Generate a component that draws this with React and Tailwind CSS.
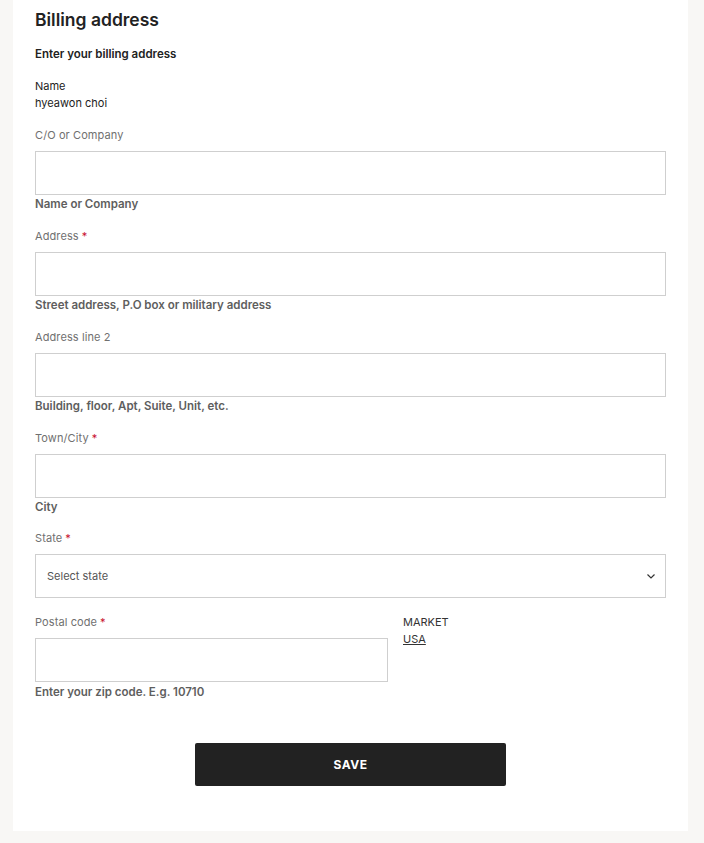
const Req = () => <span className="text-[#c8102e] ml-[3px]">*</span>;

function Field({ label, required, helper, last }) {
  return (
    <div className={last ? 'mb-[15px]' : 'mb-[16px]'}>
      <div className="text-[11px] leading-[16px] text-[#707070] mb-[8px] tracking-[0.1px]">
        {label}
        {required && <Req />}
      </div>
      <input className="block w-full h-[44px] border border-[#cfcfcf] bg-white outline-none px-3 text-[12px]" />
      <div className="mt-[1px] text-[11.5px] leading-[16px] font-semibold text-[#5e5e5e]">{helper}</div>
    </div>
  );
}

export default function App() {
  return (
    <div
      className="min-h-[843px] bg-[#f8f7f5] pl-[13px] pr-[16px]"
      style={{ fontFamily: 'Inter, "Noto Sans", sans-serif' }}
    >
      <div className="bg-white px-[22px] pb-[45px]">
        <h1 className="pt-[9px] text-[17.5px] leading-[22px] font-semibold text-[#222]">Billing address</h1>
        <div className="mt-[15px] text-[11.5px] leading-[16px] font-semibold text-[#222]">Enter your billing address</div>

        <div className="mt-[16px] text-[11px] leading-[16px] text-[#222]">Name</div>
        <div className="mt-[1px] text-[11px] leading-[16px] text-[#222]">hyeawon choi</div>

        <div className="mt-[16px]">
          <Field label="C/O or Company" helper="Name or Company" />
          <Field label="Address" required helper="Street address, P.O box or military address" />
          <Field label="Address line 2" helper="Building, floor, Apt, Suite, Unit, etc." />
          <Field label="Town/City" required helper="City" last />

          <div className="mb-[16px]">
            <div className="text-[11px] leading-[16px] text-[#707070] mb-[8px] tracking-[0.1px]">
              State
              <Req />
            </div>
            <div className="flex items-center justify-between h-[44px] border border-[#cfcfcf] pl-[11px] pr-[8px]">
              <span className="text-[11px] text-[#555]">Select state</span>
              <svg width="12" height="12" viewBox="0 0 12 12" fill="none" stroke="#333" strokeWidth="1.2">
                <path d="M2.5 4.5 6 8l3.5-3.5" />
              </svg>
            </div>
          </div>

          <div className="flex gap-[15px]">
            <div className="w-[353px]">
              <div className="text-[11px] leading-[16px] text-[#707070] mb-[8px] tracking-[0.1px]">
                Postal code
                <Req />
              </div>
              <input className="block w-full h-[44px] border border-[#cfcfcf] bg-white outline-none px-3 text-[12px]" />
              <div className="mt-[2px] text-[11.5px] leading-[16px] font-semibold text-[#5e5e5e]">Enter your zip code. E.g. 10710</div>
            </div>
            <div>
              <div className="text-[11px] leading-[16px] text-[#333]">MARKET</div>
              <div className="mt-[1px] text-[11px] leading-[16px] text-[#333] underline">USA</div>
            </div>
          </div>
        </div>

        <div className="flex justify-center mt-[43px]">
          <button className="w-[311px] h-[43px] bg-[#222] rounded-[2px] text-white text-[12px] font-bold tracking-[0.5px]">
            SAVE
          </button>
        </div>
      </div>
    </div>
  );
}
